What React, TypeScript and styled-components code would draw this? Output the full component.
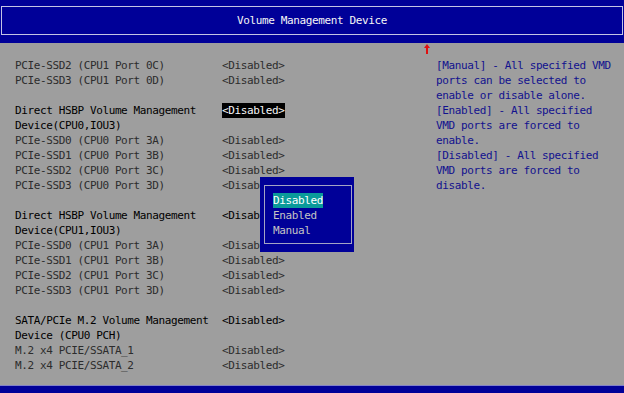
import React from "react"
import styled, { createGlobalStyle } from "styled-components"

const GlobalStyle = createGlobalStyle`
    html, body {
        margin: 0;
        padding: 0;
        background: #9e9e9e;
    }
`

const Screen = styled.div`
    position: relative;
    width: 624px;
    height: 393px;
    display: flex;
    flex-direction: column;
    background: #9e9e9e;
    font-family: "DejaVu Sans Mono", "Liberation Mono", monospace;
    font-size: 11px;
    letter-spacing: -0.38px;
    line-height: 15px;
    overflow: hidden;
`

const Header = styled.div`
    height: 43px;
    box-sizing: border-box;
    padding: 6px 1px 8px 1px;
    background: #000098;
`

const TitleBox = styled.div`
    height: 100%;
    box-sizing: border-box;
    border: 1px solid #c4c4e4;
    display: flex;
    align-items: center;
    justify-content: center;
    color: #f6f6f6;
`

const Body = styled.div`
    flex: 1;
    display: grid;
    grid-template-columns: 427px 1fr;
`

const Settings = styled.div`
    padding: 15px 0 0 15px;
    display: flex;
    flex-direction: column;
`

const Row = styled.div`
    display: grid;
    grid-template-columns: 207px auto;
    height: 15px;
    white-space: pre;
`

const Label = styled.span<{ $main?: boolean }>`
    color: ${({ $main }) => ($main ? "#000" : "#2c2c2c")};
`

const Value = styled.span<{ $main?: boolean; $selected?: boolean }>`
    justify-self: start;
    padding: 0 1px 0 0;
    color: ${({ $main, $selected }) => ($selected ? "#f6f6f6" : $main ? "#000" : "#2c2c2c")};
    background: ${({ $selected }) => ($selected ? "#000" : "transparent")};
`

const Help = styled.div`
    position: relative;
    padding: 15px 0 0 9px;
    color: #12128e;
    white-space: pre;
`

const ScrollArrow = styled.svg`
    position: absolute;
    left: -3px;
    top: 1px;
`

const Footer = styled.div`
    height: 7px;
    background: #000098;
    border-top: 1px solid #8080c8;
`

const Popup = styled.div`
    position: absolute;
    left: 260px;
    top: 177px;
    width: 94px;
    height: 75px;
    box-sizing: border-box;
    padding: 8px 2px 8px 4px;
    background: #000098;
`

const PopupFrame = styled.div`
    height: 100%;
    box-sizing: border-box;
    border: 1px solid #a4a4c4;
    padding: 7px 0 0 8px;
    display: flex;
    flex-direction: column;
`

const Option = styled.span<{ $active?: boolean }>`
    align-self: flex-start;
    height: 15px;
    color: ${({ $active }) => ($active ? "#ffffff" : "#c4c4c4")};
    background: ${({ $active }) => ($active ? "#0a9a9a" : "transparent")};
`

type Item = { label: string; value?: string; main?: boolean; selected?: boolean }

const rows: Item[] = [
    { label: "PCIe-SSD2 (CPU1 Port 0C)", value: "<Disabled>" },
    { label: "PCIe-SSD3 (CPU1 Port 0D)", value: "<Disabled>" },
    { label: "" },
    { label: "Direct HSBP Volume Management", value: "<Disabled>", main: true, selected: true },
    { label: "Device(CPU0,IOU3)", main: true },
    { label: "PCIe-SSD0 (CPU0 Port 3A)", value: "<Disabled>" },
    { label: "PCIe-SSD1 (CPU0 Port 3B)", value: "<Disabled>" },
    { label: "PCIe-SSD2 (CPU0 Port 3C)", value: "<Disabled>" },
    { label: "PCIe-SSD3 (CPU0 Port 3D)", value: "<Disabled>" },
    { label: "" },
    { label: "Direct HSBP Volume Management", value: "<Disabled>", main: true },
    { label: "Device(CPU1,IOU3)", main: true },
    { label: "PCIe-SSD0 (CPU1 Port 3A)", value: "<Disabled>" },
    { label: "PCIe-SSD1 (CPU1 Port 3B)", value: "<Disabled>" },
    { label: "PCIe-SSD2 (CPU1 Port 3C)", value: "<Disabled>" },
    { label: "PCIe-SSD3 (CPU1 Port 3D)", value: "<Disabled>" },
    { label: "" },
    { label: "SATA/PCIe M.2 Volume Management", value: "<Disabled>", main: true },
    { label: "Device (CPU0 PCH)", main: true },
    { label: "M.2 x4 PCIE/SSATA_1", value: "<Disabled>" },
    { label: "M.2 x4 PCIE/SSATA_2", value: "<Disabled>" },
]

const helpText = [
    "[Manual] - All specified VMD",
    "ports can be selected to",
    "enable or disable alone.",
    "[Enabled] - All specified",
    "VMD ports are forced to",
    "enable.",
    "[Disabled] - All specified",
    "VMD ports are forced to",
    "disable.",
]

const options = ["Disabled", "Enabled", "Manual"]

const App: React.FC = () => (
    <Screen>
        <GlobalStyle />
        <Header>
            <TitleBox>Volume Management Device</TitleBox>
        </Header>
        <Body>
            <Settings>
                {rows.map((row, i) => (
                    <Row key={i}>
                        <Label $main={row.main}>{row.label}</Label>
                        {row.value && (
                            <Value $main={row.main} $selected={row.selected}>{row.value}</Value>
                        )}
                    </Row>
                ))}
            </Settings>
            <Help>
                <ScrollArrow width="6" height="10" viewBox="0 0 6 10">
                    <path d="M3 0 L6 4 L4 4 L4 10 L2 10 L2 4 L0 4 Z" fill="#e01010" />
                </ScrollArrow>
                {helpText.map((line) => (
                    <div key={line}>{line}</div>
                ))}
            </Help>
        </Body>
        <Footer />
        <Popup>
            <PopupFrame>
                {options.map((opt, i) => (
                    <Option key={opt} $active={i === 0}>{opt}</Option>
                ))}
            </PopupFrame>
        </Popup>
    </Screen>
)

export default App
